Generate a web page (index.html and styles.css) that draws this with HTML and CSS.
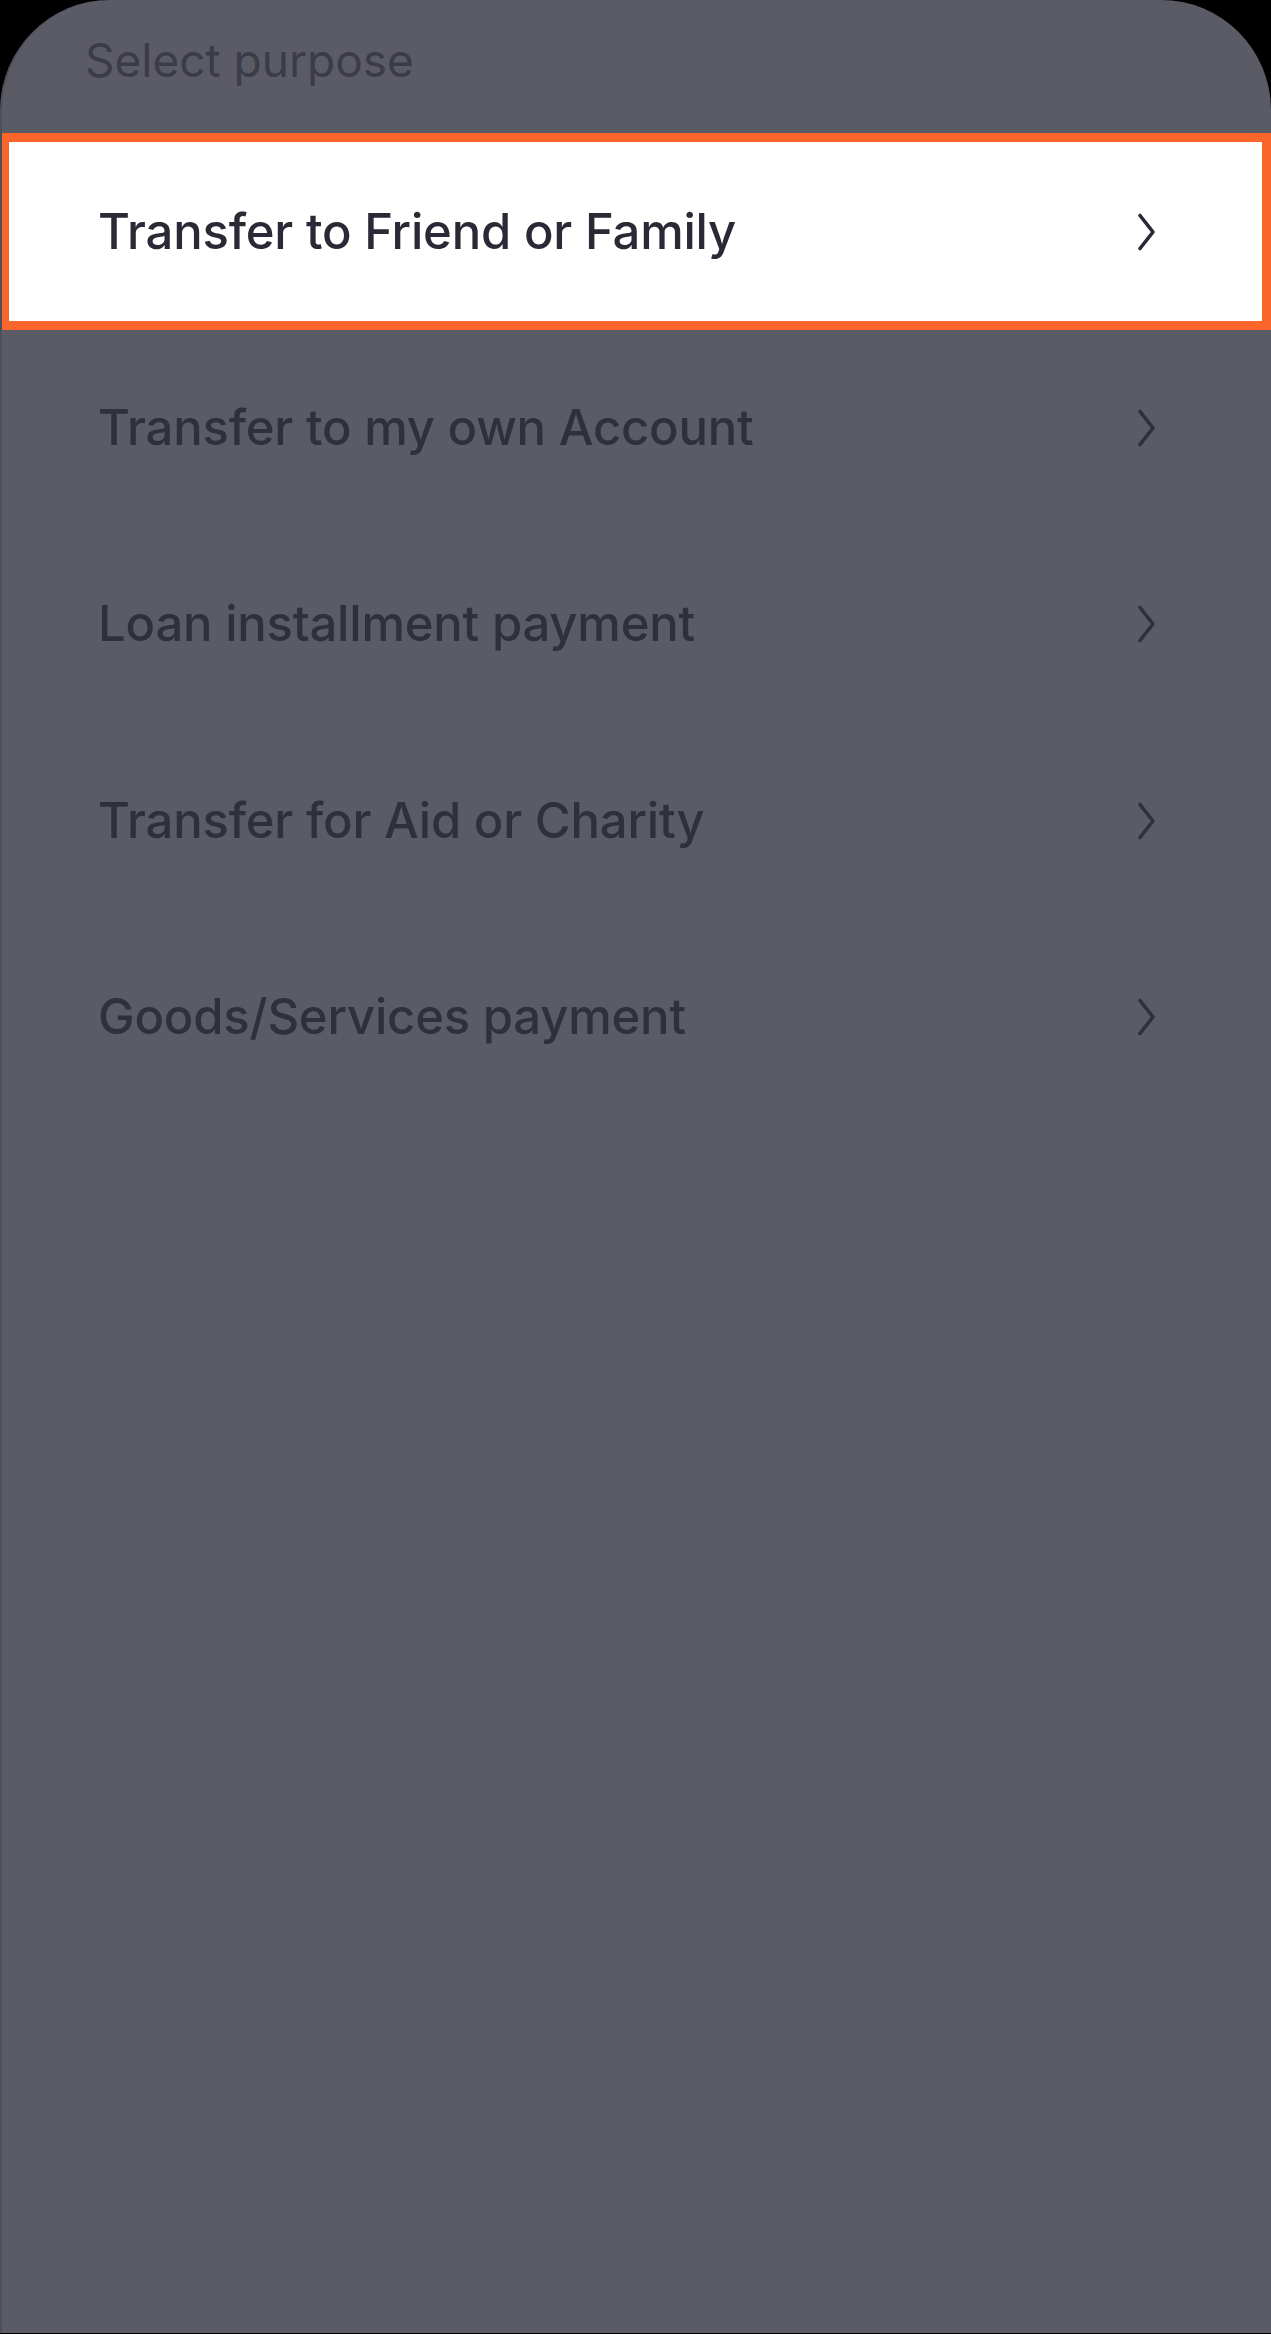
FILE: index.html
```html
<!DOCTYPE html>
<html lang="en">
<head>
<meta charset="utf-8">
<title>Select purpose</title>
<link rel="stylesheet" href="styles.css">
</head>
<body>
<div class="sheet">
  <div class="sheet-header">Select purpose</div>
  <ul class="list">
    <li class="row selected">
      <span class="label">Transfer to Friend or Family</span>
      <svg class="chev" width="20" height="40" viewBox="0 0 20 40"><path d="M3 3.5 L16 20 L3 36.5" /></svg>
    </li>
    <li class="row">
      <span class="label">Transfer to my own Account</span>
      <svg class="chev" width="20" height="40" viewBox="0 0 20 40"><path d="M3 3.5 L16 20 L3 36.5" /></svg>
    </li>
    <li class="row">
      <span class="label">Loan installment payment</span>
      <svg class="chev" width="20" height="40" viewBox="0 0 20 40"><path d="M3 3.5 L16 20 L3 36.5" /></svg>
    </li>
    <li class="row">
      <span class="label">Transfer for Aid or Charity</span>
      <svg class="chev" width="20" height="40" viewBox="0 0 20 40"><path d="M3 3.5 L16 20 L3 36.5" /></svg>
    </li>
    <li class="row">
      <span class="label">Goods/Services payment</span>
      <svg class="chev" width="20" height="40" viewBox="0 0 20 40"><path d="M3 3.5 L16 20 L3 36.5" /></svg>
    </li>
  </ul>
</div>
</body>
</html>
```
FILE: styles.css
```css
* { box-sizing: border-box; }
html, body {
  margin: 0;
  padding: 0;
  background: #000;
}
body {
  font-family: Inter, "Noto Sans", sans-serif;
  width: 1271px;
  height: 2334px;
  overflow: hidden;
}
.sheet {
  height: 2333px;
  background: #5b5b66;
  border-radius: 110px 110px 0 0;
  border-left: 2px solid #4f4f5a;
  overflow: hidden;
}
.sheet-header {
  height: 133px;
  padding: 32px 0 0 83px;
  font-size: 46px;
  line-height: 56px;
  font-weight: 400;
  color: #3c3c48;
}
.list {
  list-style: none;
  margin: 0;
  padding: 0;
}
.row {
  height: 196.5px;
  display: flex;
  align-items: center;
  justify-content: space-between;
  padding: 0 114px 0 96px;
  border-bottom: 1px solid rgba(0, 0, 0, 0.025);
  color: #30303c;
}
.row.selected {
  height: 197px;
  margin-left: -2px;
  background: #fff;
  border: 9px solid #f9652a;
  padding: 0 105px 0 89px;
  color: #2a2936;
}
.label {
  font-size: 49px;
  line-height: 60px;
  font-weight: 500;
  letter-spacing: -0.2px;
}
.chev {
  display: block;
  flex: none;
}
.chev path {
  fill: none;
  stroke: currentColor;
  stroke-width: 3.6;
  stroke-linecap: round;
  stroke-linejoin: round;
}
```
